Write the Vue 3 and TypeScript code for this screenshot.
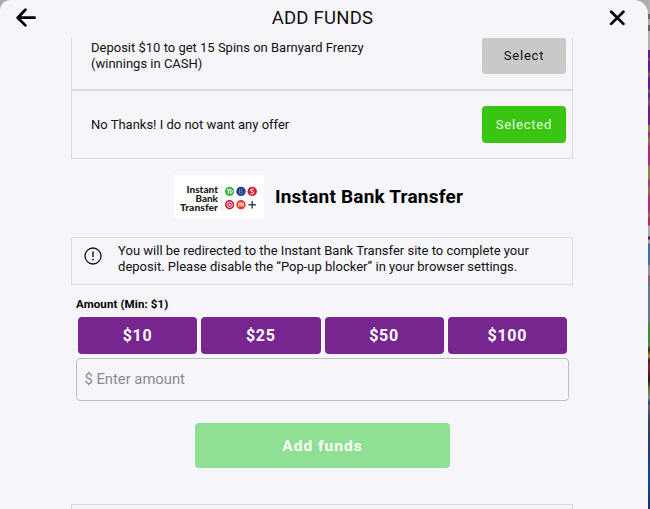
<script setup lang="ts">
import { ref } from 'vue'

interface Offer {
  id: number
  lines: string[]
}

const offers: Offer[] = [
  { id: 1, lines: ['Deposit $10 to get 15 Spins on Barnyard Frenzy', '(winnings in CASH)'] },
  { id: 2, lines: ['No Thanks! I do not want any offer'] },
]
const presets: number[] = [10, 25, 50, 100]
const selected = ref<number>(2)
const amount = ref<string>('')
</script>

<template>
  <div class="page">
    <section class="dialog">
      <header class="header">
        <button class="icon-btn" aria-label="Back">
          <svg width="20" height="20" viewBox="0 0 20 20" class="stroke-icon">
            <path d="M9.4 1.8 L1.7 9.8 L9.4 17.4 M1.8 9.7 H18.6" />
          </svg>
        </button>
        <h1 class="title">ADD FUNDS</h1>
        <button class="icon-btn" aria-label="Close">
          <svg width="16" height="16" viewBox="0 0 16 16" class="stroke-icon">
            <path d="M2.2 1.8 L14.4 13.9 M14.4 1.8 L2.2 13.9" />
          </svg>
        </button>
      </header>

      <main class="body">
        <div class="offers">
          <div v-for="offer in offers" :key="offer.id" class="offer">
            <p class="offer-text">
              <span v-for="line in offer.lines" :key="line" class="line">{{ line }}</span>
            </p>
            <button class="choose" :class="{ chosen: selected === offer.id }" @click="selected = offer.id">
              {{ selected === offer.id ? 'Selected' : 'Select' }}
            </button>
          </div>
        </div>

        <div class="method">
          <svg class="logo" width="90" height="43" viewBox="0 0 90 43">
            <rect width="90" height="43" fill="#fff" />
            <g class="logo-text" text-anchor="end">
              <text x="44" y="17.6" textLength="31.5" lengthAdjust="spacingAndGlyphs">Instant</text>
              <text x="44" y="26.6" textLength="22.5" lengthAdjust="spacingAndGlyphs">Bank</text>
              <text x="44" y="35.6" textLength="38" lengthAdjust="spacingAndGlyphs">Transfer</text>
            </g>
            <path d="M47.8 10 V36" stroke="#e6e6e8" />
            <circle cx="55.6" cy="16.4" r="4.7" fill="#43b649" />
            <path d="M53 14.6 H56 M54.4 14.6 V18.5 M56.4 15 V18.3 C59.3 18.3 59.3 14.7 56.4 14.7" stroke="#fff" fill="none" stroke-width=".9" />
            <circle cx="67" cy="16.4" r="4.7" fill="#173f98" />
            <path d="M65.5 13.8 V18.6 H68.3 C69.5 17.2 68.5 16 66.4 16.3 M67 14 L68.8 15" stroke="#a9a77b" fill="none" stroke-width=".7" />
            <circle cx="78.2" cy="16.4" r="4.7" fill="#d51f32" />
            <path d="M79.8 14.2 H77 L76.8 16 L79.5 17 L79 18.8 H76.6" stroke="#fff" fill="none" stroke-width="1" />
            <circle cx="55.6" cy="29.7" r="4.7" fill="#c8173c" />
            <circle cx="55.6" cy="29.7" r="2.7" fill="none" stroke="#fff" stroke-width=".9" />
            <path d="M54.8 28.2 L57.2 29.7 L54.8 31.2 Z" fill="#fff" />
            <circle cx="67" cy="29.7" r="4.7" fill="#ed3a2e" />
            <path d="M64.8 31.8 V28 H69.2 V31.8 M67 28 V31.5 M64.8 30 H69.2" stroke="#fff" fill="none" stroke-width=".8" />
            <path d="M78.2 26 V33.6 M74.4 29.8 H82" stroke="#444" stroke-width="1.5" />
          </svg>
          <h2 class="method-name">Instant Bank Transfer</h2>
        </div>

        <div class="notice">
          <svg class="info" width="18" height="18" viewBox="0 0 18 18">
            <circle cx="9" cy="9" r="8" fill="none" stroke="#111" stroke-width="1.3" />
            <path d="M9 4.4 V9.9" stroke="#111" stroke-width="1.4" />
            <circle cx="9" cy="12.6" r=".95" fill="#111" />
          </svg>
          <p class="notice-text">
            <span class="line">You will be redirected to the Instant Bank Transfer site to complete your</span>
            <span class="line">deposit. Please disable the “Pop-up blocker” in your browser settings.</span>
          </p>
        </div>

        <div class="form">
          <label class="label" for="amount">Amount (Min: $1)</label>
          <div class="presets">
            <button v-for="value in presets" :key="value" class="preset" @click="amount = String(value)">${{ value }}</button>
          </div>
          <input id="amount" v-model="amount" class="amount" type="text" placeholder="$ Enter amount" />
        </div>
        <button class="submit">Add funds</button>
        <div class="next-section"></div>
      </main>
    </section>
    <aside class="backdrop"></aside>
  </div>
</template>

<style>
body {
  margin: 0;
  overflow: hidden;
}
</style>

<style scoped>
.page {
  box-sizing: border-box;
  display: flex;
  width: 650px;
  height: 509px;
  overflow: hidden;
  background: linear-gradient(#adadad 0 50px, #9b9ba0 50px);
  font-family: Roboto, 'Liberation Sans', sans-serif;
  color: #111;
}
button {
  padding: 0;
  border: 0;
  font-family: inherit;
  cursor: pointer;
}
h1, h2, p {
  margin: 0;
}
.dialog {
  display: flex;
  flex-direction: column;
  width: 648px;
  flex: none;
  background: #f5f5fa;
  border-radius: 10px 14px 0 0;
  overflow: hidden;
}
.header {
  display: flex;
  flex: none;
  align-items: center;
  justify-content: space-between;
  box-sizing: border-box;
  height: 38px;
  padding: 0 23px 3px 16px;
}
.icon-btn {
  display: flex;
  background: none;
}
.stroke-icon {
  fill: none;
  stroke: #000;
  stroke-width: 2.7;
  stroke-linecap: round;
  stroke-linejoin: round;
}
.title {
  font-size: 18.5px;
  font-weight: 400;
  line-height: 24px;
  letter-spacing: 0.25px;
}
.body {
  display: flex;
  flex: 1;
  flex-direction: column;
  min-height: 0;
  overflow: hidden;
  padding: 0 75px 0 71px;
}
.offers {
  flex: none;
  margin-top: -17px;
}
.offer {
  display: flex;
  align-items: center;
  justify-content: space-between;
  box-sizing: border-box;
  height: 69px;
  padding: 0 6px 0 19px;
  border: 1px solid #dddddf;
}
.offer:first-child {
  border-bottom-color: #d8d8d9;
}
.line {
  display: block;
  white-space: nowrap;
}
.offer-text, .notice-text {
  font-size: 13px;
  line-height: 16px;
}
.choose {
  width: 84px;
  height: 37px;
  border-radius: 4px;
  background: #c9c9c9;
  color: #111;
  font-size: 13px;
  letter-spacing: 0.8px;
}
.chosen {
  background: #39c512;
  color: #e9ffe3;
}
.method {
  display: flex;
  flex: none;
  align-items: center;
  gap: 11px;
  margin: 16px 0 19px 103px;
}
.logo {
  display: block;
}
.logo-text {
  font-family: Lato, sans-serif;
  font-size: 9.5px;
  font-weight: 900;
  fill: #222;
}
.method-name {
  font-size: 19px;
  font-weight: 700;
  line-height: 24px;
  letter-spacing: 0.2px;
  white-space: nowrap;
  color: #000;
}
.notice {
  display: flex;
  flex: none;
  gap: 16.5px;
  box-sizing: border-box;
  height: 48px;
  padding: 5px 11px 0 11.6px;
  border: 1px solid #dddddf;
}
.info {
  margin-top: 4px;
}
.form {
  display: flex;
  flex: none;
  flex-direction: column;
  margin: 11px 4px 0 5px;
}
.label {
  font-size: 11.5px;
  font-weight: 700;
  line-height: 16px;
  letter-spacing: 0.12px;
  color: #000;
}
.presets {
  display: grid;
  grid-template-columns: repeat(4, 1fr);
  gap: 4px;
  margin: 5px 2px 4px;
}
.preset {
  height: 37px;
  border-radius: 4px;
  background: #77268f;
  color: #fff;
  font-size: 16px;
  font-weight: 700;
  letter-spacing: 0.8px;
}
.amount {
  box-sizing: border-box;
  width: 100%;
  height: 43px;
  padding: 0 8px 2px 7.4px;
  border: 1px solid #bfbfc3;
  border-radius: 4px;
  background: transparent;
  font-family: inherit;
  font-size: 14.8px;
  outline: none;
}
.amount::placeholder {
  color: #8b8b90;
  opacity: 1;
}
.submit {
  flex: none;
  width: 255px;
  height: 45px;
  margin: 22px 0 36px 124px;
  border-radius: 4px;
  background: #8fdf94;
  color: #fff;
  font-size: 15.5px;
  font-weight: 700;
  letter-spacing: 1px;
}
.next-section {
  flex: none;
  height: 30px;
  border: 1px solid #d9d9db;
}
.backdrop {
  flex: 1;
  background: linear-gradient(
    #b0b0b0 0 14px, #75656b 14px 19px, #aaa 19px 25px, #6e5f65 25px 31px, #b0b0b0 31px 50px,
    #5e1796 50px 57px, #784e79 59px, #611898 62px 70px, #86605f 74px, #621994 79px 88px,
    #796067 91px, #651b91 95px, #80586b 102px, #721c83 108px 124px, #8d7a4b 126px 130px,
    #9d296c 134px, #8d784f 141px, #ab2c75 147px 164px, #8d824b 167px 178px, #b02b78 182px,
    #8d744e 191px, #b12d73 198px 211px, #91774e 215px, #b62b58 219px 225px,
    #aaa 226px 236px, #452168 237px 239px, #aaa1a8 240px 243px, #446d9d 244px 264px,
    #9b8e9b 266px 275px, #796779 276px 285px, #65788e 287px 320px, #3f8937 325px 341px,
    #6e7b42 345px, #332419 350px, #b49534 356px, #3c2122 360px, #8f192a 367px, #23191b 380px,
    #68743f 389px, #778d91 398px, #2a4477 403px, #70606a 406px, #464771 415px, #35405c 425px,
    #213b72 450px, #0849a0 480px, #12316e
  );
}
</style>
